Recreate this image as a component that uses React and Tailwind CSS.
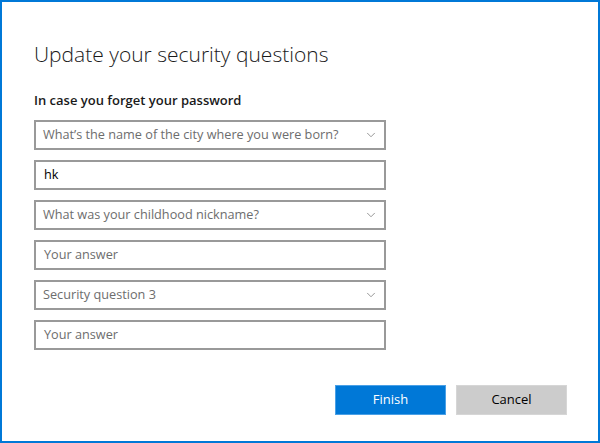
import { ChevronDown } from 'lucide-react';

const font = { fontFamily: '"Open Sans", "Noto Sans", sans-serif' };

const Select = ({ label }) => (
  <div className="flex h-[30px] w-[352px] items-center justify-between border-2 border-[#999999] bg-white pl-[7px] pr-[6px]">
    <span className="text-[12.7px] text-[#6d6d6d]">{label}</span>
    <ChevronDown className="h-[14px] w-[14px] text-[#888888]" strokeWidth={1.5} />
  </div>
);

const Input = ({ value, placeholder }) => (
  <div className="flex h-[30px] w-[352px] items-center border-2 border-[#999999] bg-white pl-[8px]">
    {value ? (
      <span className="text-[12.7px] text-black">{value}</span>
    ) : (
      <span className="text-[12.7px] text-[#6d6d6d]">{placeholder}</span>
    )}
  </div>
);

export default function App() {
  return (
    <div
      style={font}
      className="flex h-[443px] w-[600px] flex-col border-2 border-[#0078d7] bg-white pl-[32px]"
    >
      <h1 className="mt-[37px] text-[21px] font-light leading-[30px] text-[#1a1a1a]">
        Update your security questions
      </h1>
      <p className="mt-[22px] text-[13px] font-semibold leading-[18px] text-[#1a1a1a]">
        In case you forget your password
      </p>
      <div className="mt-[11px] flex flex-col gap-[10px]">
        <Select label="What’s the name of the city where you were born?" />
        <Input value="hk" />
        <Select label="What was your childhood nickname?" />
        <Input placeholder="Your answer" />
        <Select label="Security question 3" />
        <Input placeholder="Your answer" />
      </div>
      <div className="mt-[35px] flex gap-[10px] pl-[301px]">
        <button className="h-[30px] w-[111px] border border-[#4aa0e6] bg-[#0078d7] text-[13px] text-white">
          Finish
        </button>
        <button className="h-[30px] w-[111px] border border-[#d6d6d6] bg-[#cccccc] text-[13px] text-black">
          Cancel
        </button>
      </div>
    </div>
  );
}
